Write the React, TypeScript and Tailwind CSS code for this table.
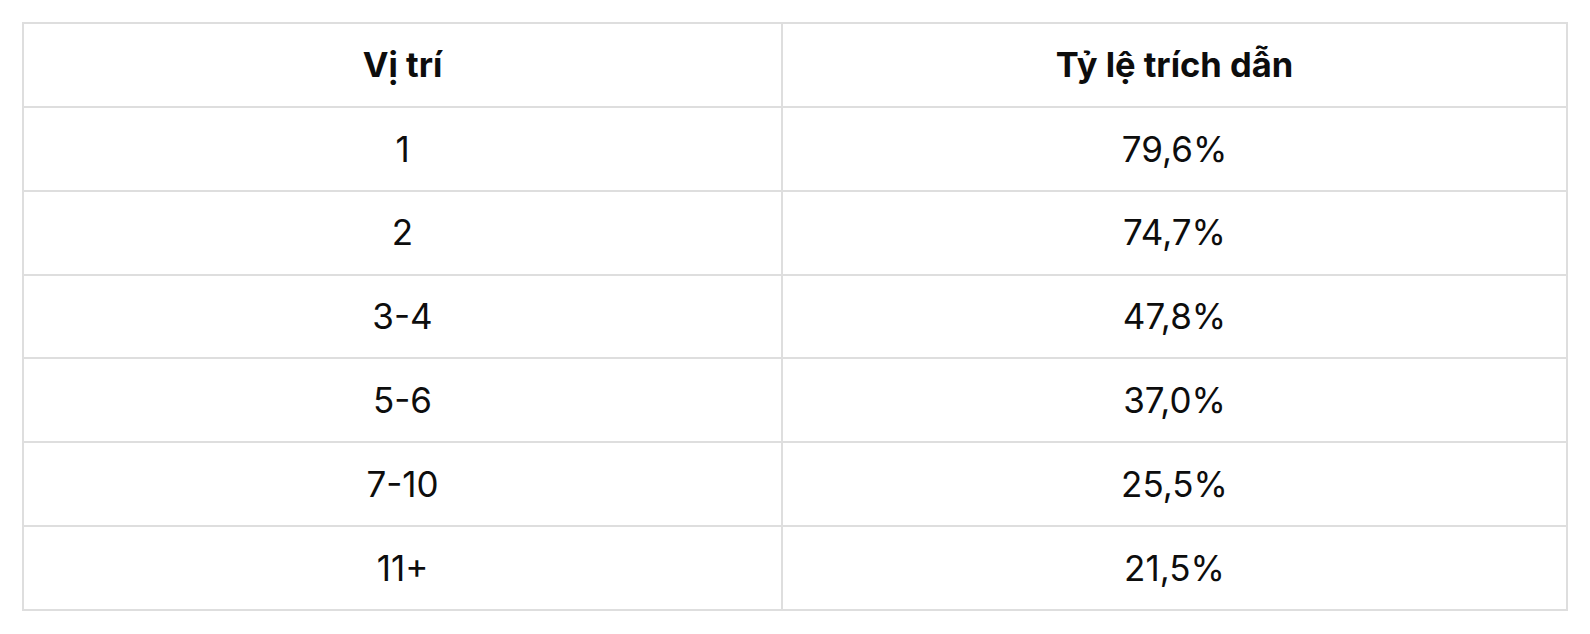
import React from "react";

const rows: [string, string][] = [
  ["1", "79,6%"],
  ["2", "74,7%"],
  ["3-4", "47,8%"],
  ["5-6", "37,0%"],
  ["7-10", "25,5%"],
  ["11+", "21,5%"],
];

export default function App() {
  return (
    <div className="w-[1590px] h-[634px] bg-white p-[22px] font-['Inter',sans-serif] text-[#0d0d0d]">
      <div className="grid grid-cols-[759px_785px] border-l-2 border-t-2 border-[#dedede]">
        {/* header */}
        <div className="h-[84px] flex items-center justify-center border-r-2 border-b-2 border-[#dedede] text-[34.5px] font-bold">
          Vị trí
        </div>
        <div className="h-[84px] flex items-center justify-center border-r-2 border-b-2 border-[#dedede] text-[34.5px] font-bold">
          Tỷ lệ trích dẫn
        </div>
        {rows.map(([pos, rate]) => (
          <React.Fragment key={pos}>
            <div className="h-[83.83px] flex items-center justify-center border-r-2 border-b-2 border-[#dedede] text-[35px]">
              {pos}
            </div>
            <div className="h-[83.83px] flex items-center justify-center border-r-2 border-b-2 border-[#dedede] text-[35px]">
              {rate}
            </div>
          </React.Fragment>
        ))}
      </div>
    </div>
  );
}
